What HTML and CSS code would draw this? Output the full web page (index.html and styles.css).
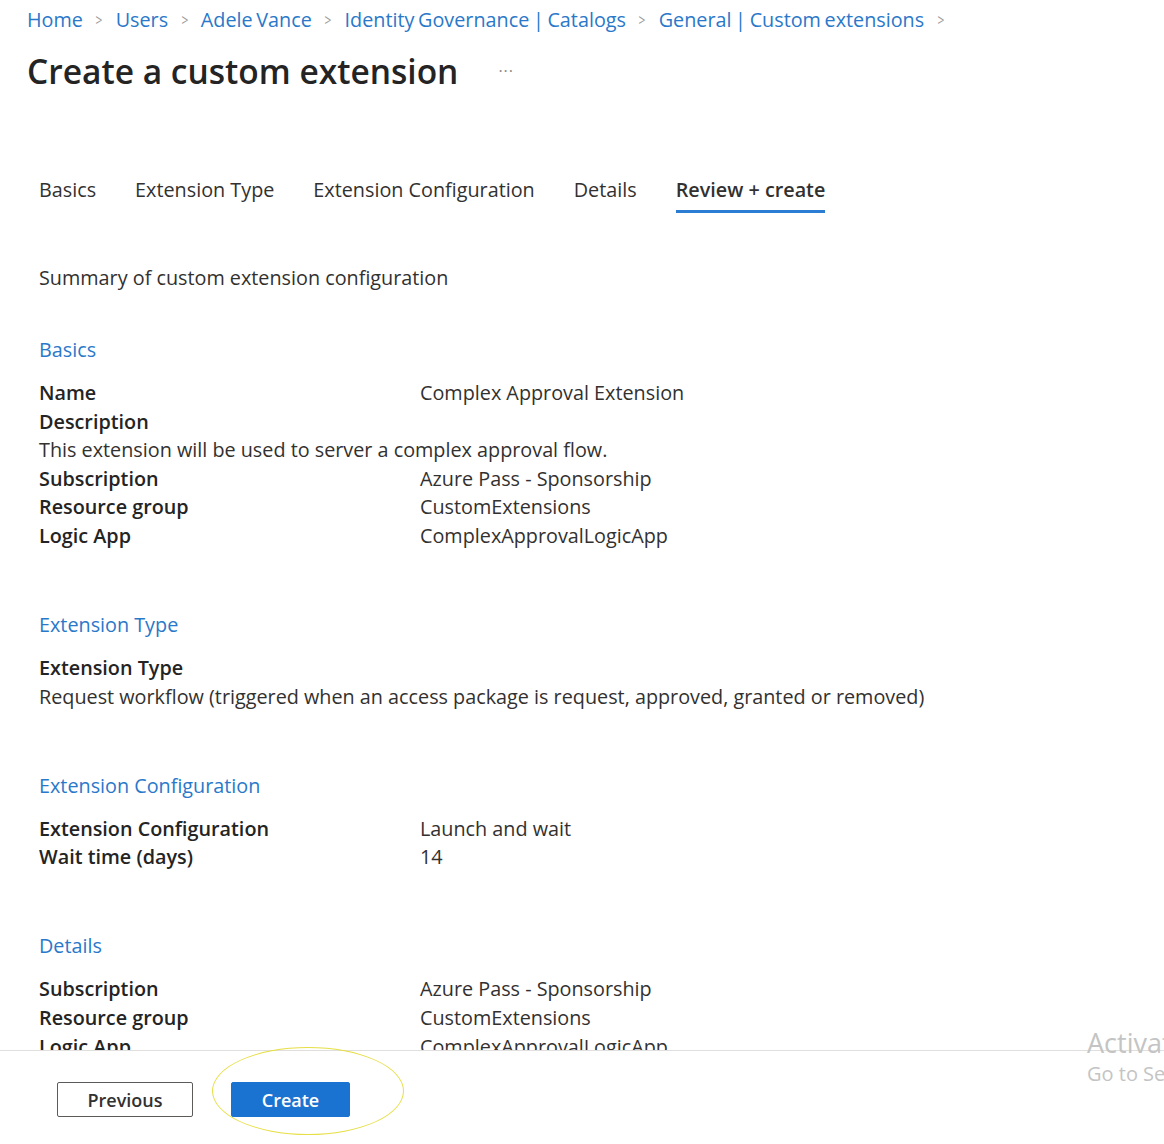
FILE: index.html
```html
<!DOCTYPE html>
<html lang="en">
<head>
<meta charset="utf-8">
<title>Create a custom extension</title>
<link rel="stylesheet" href="styles.css">
</head>
<body>
<div class="page">
  <div class="scroll">
    <nav class="breadcrumb">
      <a class="crumb">Home</a><span class="sep">&gt;</span>
      <a class="crumb">Users</a><span class="sep">&gt;</span>
      <a class="crumb">Adele Vance</a><span class="sep">&gt;</span>
      <a class="crumb">Identity Governance | Catalogs</a><span class="sep">&gt;</span>
      <a class="crumb">General | Custom extensions</a><span class="sep">&gt;</span>
    </nav>
    <div class="title-row">
      <h1 class="title">Create a custom extension</h1>
      <span class="more">&middot;&middot;&middot;</span>
    </div>

    <div class="content">
      <div class="tabs">
        <span class="tab">Basics</span>
        <span class="tab">Extension Type</span>
        <span class="tab">Extension Configuration</span>
        <span class="tab">Details</span>
        <span class="tab active">Review + create</span>
      </div>

      <p class="summary">Summary of custom extension configuration</p>

      <section class="section first">
        <h2 class="section-title">Basics</h2>
        <div class="rows">
          <div class="row"><span class="label">Name</span><span class="value">Complex Approval Extension</span></div>
          <div class="row"><span class="label">Description</span></div>
          <div class="row"><span class="text">This extension will be used to server a complex approval flow.</span></div>
          <div class="row"><span class="label">Subscription</span><span class="value">Azure Pass - Sponsorship</span></div>
          <div class="row"><span class="label">Resource group</span><span class="value">CustomExtensions</span></div>
          <div class="row"><span class="label">Logic App</span><span class="value">ComplexApprovalLogicApp</span></div>
        </div>
      </section>

      <section class="section">
        <h2 class="section-title">Extension Type</h2>
        <div class="rows">
          <div class="row"><span class="label">Extension Type</span></div>
          <div class="row"><span class="text">Request workflow (triggered when an access package is request, approved, granted or removed)</span></div>
        </div>
      </section>

      <section class="section">
        <h2 class="section-title">Extension Configuration</h2>
        <div class="rows">
          <div class="row"><span class="label">Extension Configuration</span><span class="value">Launch and wait</span></div>
          <div class="row"><span class="label">Wait time (days)</span><span class="value">14</span></div>
        </div>
      </section>

      <section class="section">
        <h2 class="section-title">Details</h2>
        <div class="rows">
          <div class="row"><span class="label">Subscription</span><span class="value">Azure Pass - Sponsorship</span></div>
          <div class="row"><span class="label">Resource group</span><span class="value">CustomExtensions</span></div>
          <div class="row"><span class="label">Logic App</span><span class="value">ComplexApprovalLogicApp</span></div>
        </div>
      </section>
    </div>
  </div>

  <footer class="footer">
    <button class="btn btn-secondary">Previous</button>
    <div class="highlight-wrap">
      <button class="btn btn-primary">Create</button>
      <span class="highlight"></span>
    </div>
  </footer>

  <div class="watermark">
    <div class="wm-title">Activate Windows</div>
    <div class="wm-sub">Go to Settings to activate Windows.</div>
  </div>
</div>
</body>
</html>
```

FILE: styles.css
```css
html, body {
  margin: 0;
  padding: 0;
  background: #ffffff;
  overflow: hidden;
}

body {
  font-family: "Open Sans", "Noto Sans", "Liberation Sans", sans-serif;
  font-size: 19.8px;
  color: #323130;
}

.page {
  position: relative;
  display: flex;
  flex-direction: column;
  height: 1144px;
  overflow: hidden;
}

.scroll {
  height: 1050px;
  overflow: hidden;
  flex: none;
}

.breadcrumb {
  display: flex;
  align-items: center;
  padding: 8px 0 0 27px;
  height: 24px;
  line-height: 24px;
  white-space: nowrap;
}

.crumb {
  color: #2a78c9;
  text-decoration: none;
  word-spacing: -1.5px;
}

.sep {
  color: #9a9a9a;
  margin: 0 11.5px;
  font-size: 17px;
  transform: scaleX(0.7);
}

.title-row {
  display: flex;
  align-items: center;
  margin-top: 17px;
  padding-left: 27px;
  height: 44px;
}

.title {
  margin: 0;
  font-size: 33.5px;
  font-weight: 600;
  line-height: 44px;
  color: #242424;
}

.more {
  margin-left: 40px;
  color: #8a8886;
  font-size: 16px;
  letter-spacing: 1px;
}

.content {
  padding-left: 39px;
}

.tabs {
  display: flex;
  gap: 39px;
  margin-top: 83px;
}

.tab {
  line-height: 28px;
  padding-bottom: 6px;
  border-bottom: 3px solid transparent;
  color: #323130;
}

.tab.active {
  font-weight: 600;
  border-bottom-color: #2b7cd3;
}

.summary {
  margin: 51px 0 0;
  line-height: 28.5px;
}

.section {
  margin-top: 60.5px;
}

.section.first {
  margin-top: 43.5px;
}

.section-title {
  margin: 0;
  font-size: 19.8px;
  font-weight: 400;
  line-height: 28.5px;
  color: #2a78c9;
}

.rows {
  margin-top: 14.5px;
}

.row {
  display: flex;
  line-height: 28.6px;
  height: 28.6px;
  white-space: nowrap;
}

.label {
  width: 381px;
  flex: none;
  font-weight: 600;
  color: #242424;
}

.value, .text {
  color: #323130;
}

.footer {
  flex: none;
  display: flex;
  align-items: flex-start;
  gap: 38px;
  border-top: 1px solid #e1dfdd;
  padding: 31px 0 0 57px;
  background: #ffffff;
  height: 63px;
}

.btn {
  height: 35px;
  font-family: inherit;
  font-size: 18px;
  font-weight: 600;
  border-radius: 2px;
  cursor: pointer;
}

.btn-secondary {
  width: 136px;
  background: #ffffff;
  color: #323130;
  border: 1px solid #5c5b5a;
}

.btn-primary {
  width: 119px;
  background: #1a73d1;
  color: #ffffff;
  border: 1px solid #1a73d1;
}

.highlight-wrap {
  position: relative;
}

.highlight {
  position: absolute;
  left: -19px;
  top: -35px;
  width: 190px;
  height: 86px;
  border: 1.5px solid #e6df45;
  border-radius: 50%;
  pointer-events: none;
}

.watermark {
  position: absolute;
  left: 1087px;
  top: 1026px;
  white-space: nowrap;
  color: #c4c4c4;
}

.wm-title {
  font-size: 27px;
  line-height: 34px;
}

.wm-sub {
  font-size: 20px;
  line-height: 28px;
}
```
